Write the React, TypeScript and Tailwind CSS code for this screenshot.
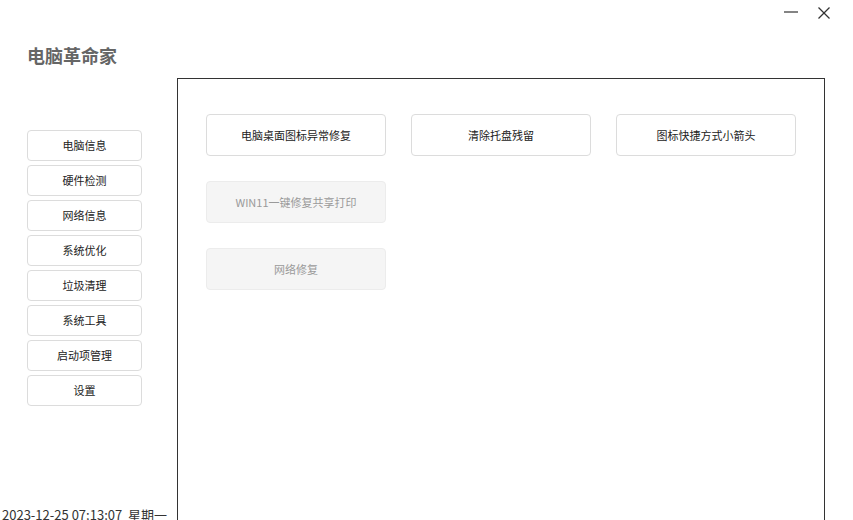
import React from "react";

const font = { fontFamily: '"Noto Sans CJK SC", "Noto Sans", sans-serif' };

const side = ["电脑信息", "硬件检测", "网络信息", "系统优化", "垃圾清理", "系统工具", "启动项管理", "设置"];

function Btn({ label, disabled }: { label: string; disabled?: boolean }) {
  return (
    <button
      className={
        disabled
          ? "w-[180px] h-[42px] rounded-[4px] border border-[#ececec] bg-[#f5f5f5] text-[11px] text-[#9a9a9a] flex items-center justify-center"
          : "w-[180px] h-[42px] rounded-[4px] border border-[#dcdcdc] bg-white text-[11px] text-[#222] flex items-center justify-center"
      }
    >
      {label}
    </button>
  );
}

export default function App() {
  return (
    <div className="relative w-[853px] h-[520px] overflow-hidden bg-white" style={font}>
      <div className="absolute top-0 right-0 flex items-center h-[26px] pr-[22px] gap-[18px]">
        <svg width="16" height="16" viewBox="0 0 16 16">
          <line x1="1" y1="7" x2="15" y2="7" stroke="#333" strokeWidth="1.2" />
        </svg>
        <svg width="14" height="14" viewBox="0 0 14 14">
          <line x1="1.5" y1="1.5" x2="12.5" y2="12.5" stroke="#333" strokeWidth="1.2" />
          <line x1="12.5" y1="1.5" x2="1.5" y2="12.5" stroke="#333" strokeWidth="1.2" />
        </svg>
      </div>
      <div className="flex h-full">
        <div className="w-[177px] shrink-0 flex flex-col">
          <div className="mt-[43px] ml-[27px] text-[18px] leading-[24px] font-bold text-[#666]">电脑革命家</div>
          <div className="mt-[63px] ml-[27px] flex flex-col gap-[4px]">
            {side.map((s) => (
              <button
                key={s}
                className="w-[115px] h-[31px] rounded-[4px] border border-[#dcdcdc] bg-white text-[11px] text-[#222] flex items-center justify-center"
              >
                {s}
              </button>
            ))}
          </div>
          <div className="mt-[100px] ml-[2px] text-[13px] leading-[18px] text-[#333] whitespace-nowrap">
            2023-12-25 07:13:07&nbsp;&nbsp;星期一
          </div>
        </div>
        <div className="mt-[78px] w-[648px] h-[460px] border border-[#333] shrink-0 pl-[28px] pt-[35px] flex flex-col gap-[25px]">
          <div className="flex gap-[25px]">
            <Btn label="电脑桌面图标异常修复" />
            <Btn label="清除托盘残留" />
            <Btn label="图标快捷方式小箭头" />
          </div>
          <Btn label="WIN11一键修复共享打印" disabled />
          <Btn label="网络修复" disabled />
        </div>
      </div>
    </div>
  );
}
